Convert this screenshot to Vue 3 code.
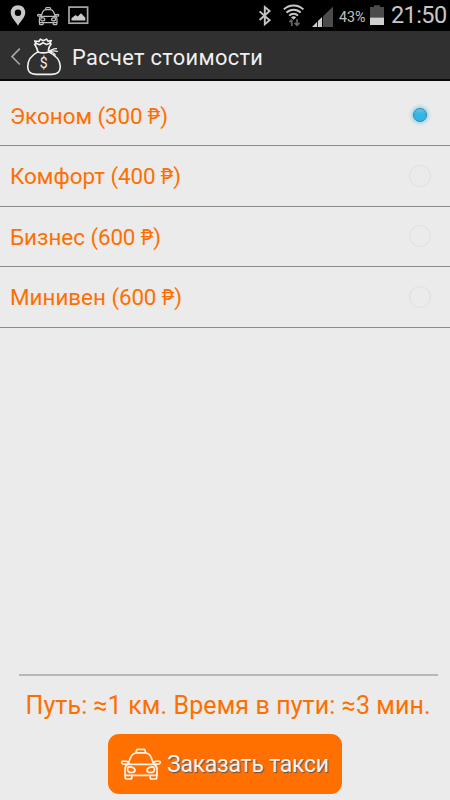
<template>
  <div class="screen">
    <div class="status-bar">
      <svg class="st-left" width="100" height="31" viewBox="0 0 100 31">
        <path fill="#c9c9c9" fill-rule="evenodd" d="M18 5.200c-4.300 0-7.300 3.200-7.300 7.300 0 5 5 8.700 7.300 13.300 2.300-4.600 7.300-8.300 7.300-13.300 0-4.100-3-7.300-7.300-7.300zm0 4.300a3.200 3.200 0 1 1 0 6.400 3.200 3.200 0 0 1 0-6.400z" />
        <g transform="translate(37.200 6.400) scale(.55 .57)" fill="none" stroke="#bdbdbd" stroke-width="2.200" stroke-linejoin="round">
          <use href="#taxi" />
        </g>
        <rect x="69" y="7.100" width="18.600" height="16.100" fill="none" stroke="#a9a9a9" stroke-width="1.700" />
        <path fill="#c9c9c9" d="M71.500 20.500v-2.200l4-3.300 2 1.500 3.500-3.200 4.300 4.500v2.700z" />
      </svg>
      <svg class="st-right" width="132" height="31" viewBox="255 0 132 31">
        <path fill="none" stroke="#c4c4c4" stroke-width="1.900" d="M259.600 11.400l10 8.800-4.800 4V7l4.800 4-10 9" />
        <g fill="none" stroke="#c8c8c8" stroke-width="2">
          <path d="M283.800 9.400a14 14 0 0 1 19.600 0" />
          <path d="M286.500 12.600a10 10 0 0 1 14.200 0" />
          <path d="M289.200 15.600a6.300 6.300 0 0 1 8.800 0" />
        </g>
        <path fill="#c8c8c8" d="M291 17.300a4 4 0 0 1 5.200 0l-2.600 2.400z" />
        <path fill="none" stroke="#666" stroke-width="1.700" d="M291.800 26v-6M289.400 22.200l2.400-2.500M297 19v6.200M294.600 22.800l2.400 2.500 2.400-2.500" />
        <path fill="#4b4b4b" d="M323 16.200l10-9.700V27h-10z" />
        <path fill="#cfcfcf" d="M312 27l5.200-5.200V27zM318 21l4-3.900V27h-4z" />
        <text x="339" y="21.500" class="percent" textLength="26.500" lengthAdjust="spacingAndGlyphs">43%</text>
        <path fill="#4b4b4b" d="M370 7h4V5.300h6V7h4v10.500h-14z" />
        <path fill="#cfcfcf" d="M370 17.500h14V25h-14z" />
      </svg>
      <span class="clock">21:50</span>
    </div>

    <header class="action-bar">
      <svg width="64" height="48" viewBox="0 31 64 48">
        <path fill="none" stroke="#a5a5a5" stroke-width="1.700" d="M19.800 48.700l-7.800 7.900 7.800 7.900" />
        <g fill="none" stroke="#f2f2f2" stroke-width="1.600" stroke-linejoin="round" stroke-linecap="round">
          <path d="M37.800 51.500c-.5-2.800-1.700-5-3.200-7.200l1.800-.8-1.700-2.500 4.200.5 1.500-2.400 2.800 1.600 3.400-1.600 1.400 2.200 3.300-.8-1.500 2.700 1.300.8c-1.600 2-2.500 4-2.800 6.300" />
          <path d="M36.400 43.500l3.300 1.200 3.300-2 3.300 1.700 3.500-1.200" />
          <path d="M37.800 51.900c3 1 8 1 10.800 0 6.500 3.100 11.700 8.400 11.700 14.700 0 5.500-3 7.800-8.300 7.800H36c-5.500 0-8.300-2.300-8.300-7.800 0-6.300 4.300-11.600 10.100-14.700z" />
          <path d="M48.900 50.800c2.600-.3 4.200-2.300 7.600-2.100M49.500 51.300c2.700-.2 4.800-.9 7.900.2M49.800 52c2.500.2 4.500 1 5.500 3" stroke-width="1.200" />
        </g>
        <text x="43.600" y="68" class="dollar">$</text>
      </svg>
      <h1>Расчет стоимости</h1>
    </header>

    <main>
      <label
        v-for="(tariff, i) in tariffs"
        :key="tariff.name"
        class="tariff"
        @click="selected = i"
      >
        <span>{{ tariff.name }} <span class="price">({{ tariff.price }} <span class="ruble">₱</span>)</span></span>
        <i class="radio" :class="{ checked: selected === i }"></i>
      </label>
    </main>

    <footer>
      <p class="route">Путь: ≈1 км. Время в пути: ≈3 мин.</p>
      <button class="order">
        <svg width="40" height="34" viewBox="0 0 40 34" fill="none" stroke="#fff3e8" stroke-width="1.700" stroke-linejoin="round">
          <g id="taxi">
            <path d="M15 5.700l.6-2.500q.3-.9 1.100-.9h6.200q.8 0 1.100.9l.6 2.500" />
            <path d="M7 17.300l2.900-7.500c1.200-2.900 3-3.800 6.100-4h7.800c3.100.2 4.900 1.100 6.100 4l2.900 7.500z" />
            <path d="M7 17.300c-2.100 1-3 2.700-3 5v6h32v-6c0-2.300-.9-4-3-5" />
            <path d="M6.800 17.200H3.300c-1.500 0-2.500-.7-2.500-1.700 0-1.200 1.300-1.500 2.800-1.400 1.800 0 3.500.6 4.200 1.600M33.200 17.200h3.500c1.500 0 2.500-.7 2.500-1.700 0-1.200-1.300-1.500-2.800-1.400-1.800 0-3.500.6-4.200 1.600" />
            <path d="M7.500 19.900c2.700 0 6.300 1 6.500 3.300 0 1.800-1.400 2.300-3.200 2.300-2.400 0-4.300-.9-4.300-3.100 0-1 .2-2 1-2.500zM32.500 19.900c-2.700 0-6.300 1-6.500 3.300 0 1.800 1.400 2.300 3.200 2.300 2.400 0 4.300-.9 4.300-3.100 0-1-.2-2-1-2.500z" />
            <path d="M4.200 28.300v2q0 1.700 1.700 1.700h3.300q1.700 0 1.700-1.700v-2M29.100 28.300v2q0 1.700 1.700 1.700h3.300q1.700 0 1.700-1.700v-2" />
          </g>
        </svg>
        <span>Заказать такси</span>
      </button>
    </footer>
  </div>
</template>

<script setup>
import { ref } from 'vue';

const selected = ref(0);

const tariffs = [
  { name: 'Эконом', price: 300 },
  { name: 'Комфорт', price: 400 },
  { name: 'Бизнес', price: 600 },
  { name: 'Минивен', price: 600 }
];
</script>

<style>
body { background: #ebebeb; }
</style>

<style scoped>
.screen {
  width: 450px;
  height: 800px;
  display: flex;
  flex-direction: column;
  overflow: hidden;
  background: #ebebeb;
  font-family: Roboto, "Noto Sans", sans-serif;
}

svg { display: block; flex: none; }

.status-bar {
  height: 31px;
  flex: none;
  display: flex;
  background: #000;
}
.st-right { margin-left: auto; }
.percent { fill: #c0c0c0; font-size: 15px; }
.clock {
  width: 63px;
  padding-left: 4px;
  box-sizing: border-box;
  color: #c6c6c6;
  font-size: 23.5px;
  line-height: 31px;
  letter-spacing: -0.6px;
  white-space: nowrap;
}

.action-bar {
  height: 50px;
  flex: none;
  box-sizing: border-box;
  display: flex;
  align-items: center;
  gap: 8px;
  background: #303030;
  border-bottom: 2px solid #080808;
}
.action-bar h1 {
  margin: 6px 0 0;
  color: #efefef;
  font-size: 21.8px;
  font-weight: 400;
  line-height: 30px;
  letter-spacing: 0.35px;
  white-space: nowrap;
}
.dollar { fill: #f2f2f2; font-size: 14px; text-anchor: middle; }

main { flex: 1; padding-top: 4.4px; }
.tariff {
  height: 60.6px;
  box-sizing: border-box;
  display: flex;
  align-items: center;
  justify-content: space-between;
  padding: 0 19px 0 10px;
  border-bottom: 1px solid #8c8c8c;
  color: #ff6f00;
  font-size: 22.4px;
  line-height: 26px;
}
.tariff > span { padding-top: 1px; }
.price { letter-spacing: -0.15px; }
.ruble {
  font-family: "Noto Sans", sans-serif;
  font-size: 22px;
  font-weight: 400;
  line-height: 1;
}

.radio {
  width: 22px;
  height: 22px;
  box-sizing: border-box;
  border: 1px solid #e0e0e0;
  border-radius: 50%;
}
.radio.checked {
  display: grid;
  place-items: center;
  border-color: #dde5e7;
  background: radial-gradient(circle closest-side, #8fd3ec 62%, #d8e6ea 95%);
}
.radio.checked::after {
  content: "";
  width: 14px;
  height: 14px;
  box-sizing: border-box;
  border: 1px solid #3b87a4;
  border-radius: 50%;
  background: linear-gradient(#62c4e9, #33b5e5 45%);
}

footer {
  height: 126px;
  flex: none;
  display: flex;
  flex-direction: column;
  align-items: center;
}
.route {
  width: 419px;
  height: 60px;
  margin: 0 0 0 6px;
  box-sizing: border-box;
  border-top: 2px solid #b8b8b8;
  padding: 15px 0 0 7px;
  color: #ff6f00;
  font-size: 25px;
  line-height: 30px;
  letter-spacing: 0.1px;
  white-space: nowrap;
}
.order {
  width: 234px;
  height: 60px;
  display: flex;
  align-items: center;
  gap: 6px;
  padding: 0 0 0 13px;
  border: 0;
  border-radius: 11px;
  background: #ff7000;
  color: #f3f3f3;
  font-family: inherit;
  font-size: 23px;
  letter-spacing: -0.25px;
  white-space: nowrap;
  text-shadow: 1px 1px 1px #555;
}
.order span { padding-top: 1px; }
</style>
